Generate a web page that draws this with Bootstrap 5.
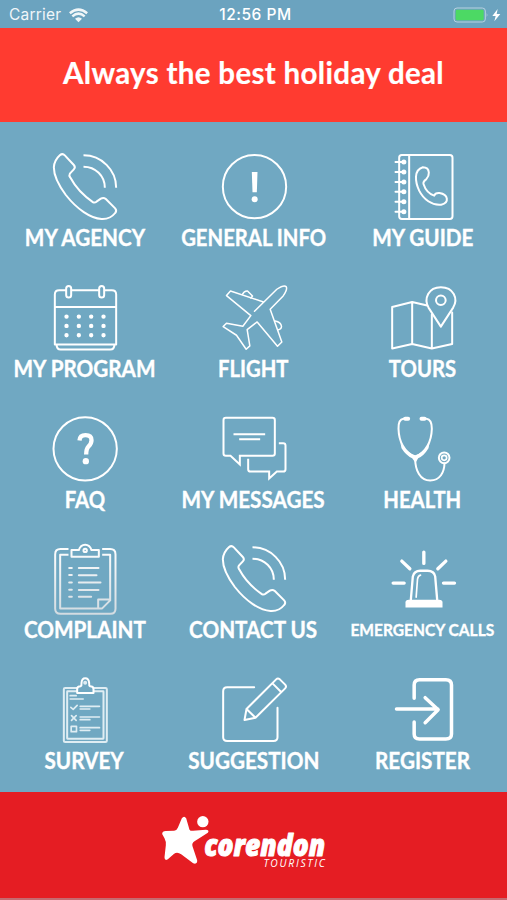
<!DOCTYPE html>
<html lang="en">
<head>
<meta charset="utf-8">
<meta name="viewport" content="width=device-width, initial-scale=1">
<title>Corendon Touristic</title>
<link href="https://cdn.jsdelivr.net/npm/bootstrap@5.3.0/dist/css/bootstrap.min.css" rel="stylesheet">
<style>
:root{--sea:#70a8c2}
body{background:var(--sea);color:#fff;font-family:Lato,sans-serif;overflow:hidden}
.phone{height:900px}
.status{height:28px;background:#6ba3bf;font:400 15.5px/1 Inter,sans-serif;padding:2px 5px 0 9px}
.status>div{flex:1 1 0}
.status .carrier{letter-spacing:.2px;opacity:.9}
.status .clock{font-weight:500;letter-spacing:.55px;text-align:center;font-size:15.5px}
.banner{height:94px;padding-bottom:4px;background:#ff3b30;font-weight:700;font-size:29.5px;letter-spacing:.33px;line-height:1;white-space:nowrap;-webkit-text-stroke:.2px #fff}
.tiles{height:670px;padding-top:26px;display:grid;grid-template-columns:repeat(3,1fr);grid-auto-rows:106px;row-gap:24.75px;align-content:start}
.tile{color:#fff}
.tile:hover{color:#fff}
.tile svg{width:90px;height:76px;flex:none;fill:none;stroke:#fff;stroke-width:6;stroke-linecap:round;stroke-linejoin:round}
.tile .solid{fill:#fff;stroke:none}
.tile .mask{fill:var(--sea)}
.tile span{font-weight:700;font-size:22px;line-height:28px;white-space:nowrap;transform:scaleX(.94);-webkit-text-stroke:.35px #fff}
.tile .fine{font-size:16.3px;transform:scaleX(.955)}
.tile .snug{transform:scaleX(.922)}
.brand{height:108px;background:#e51d23;border-bottom:2px solid #c56a70}
.brand svg{width:220px;height:106px}
</style>
<script src="https://cdn.jsdelivr.net/npm/bootstrap@5.3.0/dist/js/bootstrap.bundle.min.js"></script>
</head>
<body>
<div class="phone d-flex flex-column">
<header>
<div class="status d-flex align-items-center">
<div class="carrier d-flex align-items-center"><span>Carrier</span>
<svg class="ms-2" width="19" height="15" viewBox="0 0 57 45" fill="#fff"><path d="M28.500 43L18 32Q28.500 23 39 32Z"/><path d="M10 25Q28.500 9 47 25M2.500 15.500Q28.500-6 54.500 15.500" fill="none" stroke="#fff" stroke-width="7.500"/></svg></div>
<div class="clock"><span>12:56 PM</span></div>
<div class="d-flex align-items-center justify-content-end"><svg width="49" height="18" viewBox="0 0 147 54"><rect x="3" y="6" width="94" height="42" rx="9" fill="none" stroke="#b7d2df" stroke-width="3"/><rect x="8" y="11" width="84" height="32" rx="4" fill="#4cd964"/><path d="M101 21Q106 27 101 33Z" fill="#b7d2df"/><path d="M134 9L118 30H128L124 46L142 24H131Z" fill="#fff"/></svg></div>
</div>
<div class="banner d-flex align-items-center justify-content-center"><span>Always the best holiday deal</span></div>
</header>
<main class="tiles">
<a class="tile d-flex flex-column align-items-center text-decoration-none" href="#"><svg viewBox="118.5 24 270 228"><g id="call"><path d="M178 46Q186 39 193 46L220 75Q226 82 220 88L208 101Q205 106 209 112C225 142 250 168 278 187Q283 189 288 185L301 176Q309 171 316 177L344 205Q350 212 344 219C333 233 318 238 303 237C270 235 230 208 196 165C172 133 160 105 160 82C161 66 168 55 178 46Z"/><path stroke-linecap="butt" d="M249 46C303 46 347 90 347 143M249 80C285 80 313 108 313 143"/></g></svg><span>MY AGENCY</span></a>
<a class="tile d-flex flex-column align-items-center text-decoration-none" href="#"><svg viewBox="625.5 24 270 228"><circle cx="762" cy="140" r="95"/><path class="solid" d="M754 96H771L769 157H756Z"/><circle class="solid" cx="762.500" cy="178" r="9"/></svg><span class="snug">GENERAL INFO</span></a>
<a class="tile d-flex flex-column align-items-center text-decoration-none" href="#"><svg viewBox="373.5 24 270 228"><rect x="437" y="45" width="160" height="192" rx="8"/><path d="M467 45V237M426 66H452M426 96H452M426 126H452M426 155H452M426 185H452M426 215H452"/><g style="stroke-width:15px"><path d="M451 66h.1M451 96h.1M451 126h.1M451 155h.1M451 185h.1M451 215h.1"/></g><path d="M508 82Q525 82 526 98Q527 108 518 118Q508 124 510 132C515 148 528 162 542 167Q545 158 558 159Q578 162 580 176Q582 190 563 194C535 197 510 178 497 152C485 126 480 90 508 82Z"/></svg><span>MY GUIDE</span></a>

<a class="tile d-flex flex-column align-items-center text-decoration-none" href="#"><svg viewBox="118.5 11.25 270 228"><path d="M163 208V58Q163 45 176 45H334Q347 45 347 58V208ZM163 95H347M168 208Q169 223 180 223H330Q341 223 342 208"/><rect class="mask" x="197" y="32" width="15" height="35" rx="7.500"/><rect class="mask" x="296" y="32" width="15" height="35" rx="7.500"/><path stroke-width="13" d="M198 124h.1M235 124h.1M272 124h.1M309 124h.1M198 152h.1M235 152h.1M272 152h.1M309 152h.1M198 180h.1M235 180h.1M272 180h.1M309 180h.1"/></svg><span>MY PROGRAM</span></a>
<a class="tile d-flex flex-column align-items-center text-decoration-none" href="#"><svg viewBox="625.5 11.25 270 228"><g style="stroke-width:4.5px"><path d="M762 108L829 42Q850 28 857 34Q862 42 848 62L809 102L844 200L831 213L770 140L740 163L748 212L737 222L708 180L668 154L678 144L727 153L751 121L678 61L690 47L789 80"/><path d="M726 57Q731 46 741 47L756 62L751 68M824 137Q841 140 843 153Q843 162 832 164"/></g></svg><span class="snug">FLIGHT</span></a>
<a class="tile d-flex flex-column align-items-center text-decoration-none" href="#"><svg viewBox="373.5 11.25 270 228"><path d="M521 91L476 80L416 95V220L476 206L535 220L596 206V112M476 80V206M535 118V220"/><path d="M562 154L525 97C510 70 525 36 562 36C600 36 615 70 599 97Z"/><circle cx="562" cy="75" r="14.500"/></svg><span class="snug">TOURS</span></a>

<a class="tile d-flex flex-column align-items-center text-decoration-none" href="#"><svg viewBox="118.5 13.5 270 228"><circle cx="254" cy="130" r="95"/><path stroke-width="13" stroke-linecap="butt" d="M237 105Q238 89 255 89Q273 89 273 104Q273 114 264 123Q257 130 257 147"/><circle class="solid" cx="256" cy="167" r="9.500"/></svg><span class="snug">FAQ</span></a>
<a class="tile d-flex flex-column align-items-center text-decoration-none" href="#"><svg viewBox="625.5 13.5 270 228"><path stroke-linejoin="miter" stroke-linecap="butt" d="M718 151H816Q823 151 823 144V44Q823 37 816 37H676Q669 37 669 44V144Q669 151 676 151H690L718 177ZM699 86H794M716 101H779M835 113H848Q855 113 855 120V191Q855 198 848 198H829L806 219V198H750Q743 198 743 191V160"/></svg><span>MY MESSAGES</span></a>
<a class="tile d-flex flex-column align-items-center text-decoration-none" href="#"><svg viewBox="373.5 13.5 270 228"><path d="M458 40H450Q434 42 435 70C436 110 455 140 485 155C515 140 534 110 535 70Q535 42 519 40H511M485 158C485 195 500 225 530 225C560 225 572 200 573 174"/><path stroke-width="12" d="M455 40H464M504 40H513"/><path class="solid" d="M441 113Q460 142 485 149Q510 142 528 113L525 128Q511 151 494 158L486 172L476 158Q458 150 444 128Z"/><circle cx="572" cy="157" r="16"/><circle cx="572" cy="157" r="7.500" stroke-width="5"/></svg><span class="snug">HEALTH</span></a>

<a class="tile d-flex flex-column align-items-center text-decoration-none" href="#"><svg viewBox="118.5 15.75 270 228"><defs><linearGradient id="fade" gradientUnits="userSpaceOnUse" x1="0" y1="30" x2="0" y2="240"><stop stop-color="#fff"/><stop offset="1" stop-color="#d2dbe1"/></linearGradient></defs><g stroke="url(#fade)"><path stroke-linecap="butt" d="M204 43H180Q164 43 164 59V222Q164 237 180 237H330Q345 237 345 222V59Q345 43 329 43H305M204 60H179V221H305L329 197V60H305M293 221V194H328"/><path d="M213 46H235Q240 30 254 30Q268 30 273 46H295V66H213Z"/><circle cx="254" cy="47" r="5"/><path d="M206 100h8M206 121h8M206 143h8M206 165h8M206 186h8M235 100H294M235 121.500H288M235 143H300M235 165.500H294M235 186H272"/></g></svg><span>COMPLAINT</span></a>
<a class="tile d-flex flex-column align-items-center text-decoration-none" href="#"><svg viewBox="118.5 24 270 228"><use href="#call"/></svg><span>CONTACT US</span></a>
<a class="tile d-flex flex-column align-items-center text-decoration-none" href="#"><svg viewBox="373.5 15.75 270 228"><path stroke-width="10" d="M511 52V86M445 79L469 102M577 79L553 102M419 145H452M570 145H603"/><path stroke-width="7" d="M472 195L478 125Q482 108 500 108H522Q542 108 545 125L551 195"/><path stroke-width="5" d="M488 187L492 133Q494 122 501 121"/><path class="solid" d="M456 218V203Q456 195 466 195H557Q567 195 567 203V218Z"/></svg><span class="fine">EMERGENCY CALLS</span></a>

<a class="tile d-flex flex-column align-items-center text-decoration-none" href="#"><svg viewBox="118.5 18 270 228"><g stroke="#dfedf3"><g stroke-width="6"><rect x="190" y="69" width="129" height="162" rx="4"/><rect x="200" y="79" width="109" height="142" rx="1"/><path class="mask" stroke="#fff" d="M230 84V72Q230 64 240 64Q244 62 243 54Q244 40 254 40Q265 40 266 54Q265 62 269 64Q279 64 279 72V84Z"/><circle cx="254" cy="53" r="3"/></g><path stroke-width="5" d="M209 92H227M209 102H248M211 127L218 133L230 121M239 124H297M239 132H268M213 152L227 166M227 152L213 166M239 156H297M239 164H268M212 184H228V200H212ZM239 188H297M239 196H268"/></g></svg><span>SURVEY</span></a>
<a class="tile d-flex flex-column align-items-center text-decoration-none" href="#"><svg viewBox="625.5 18 270 228"><path d="M761 67H680Q668 67 668 79V217Q668 228 680 228H819Q831 228 831 217V128M732 165L738 132L827 43Q832 38 838 43L854 59Q859 65 854 70L765 158ZM816 55L842 81M738 132L765 158"/></svg><span>SUGGESTION</span></a>
<a class="tile d-flex flex-column align-items-center text-decoration-none" href="#"><svg viewBox="373.5 18 270 228"><path stroke-width="10.500" d="M482 100V60Q482 44 498 44H577Q594 44 594 60V207Q594 222 577 222H498Q482 222 482 207V171M429 132H553M515 98L554 134L515 173"/></svg><span>REGISTER</span></a>
</main>
<footer class="brand d-flex justify-content-center"><svg viewBox="10.5 21 660 318" fill="#fff"><circle cx="187" cy="110" r="17"/><path d="M124 100Q131 90 137 100L147 134Q151 139 158 137L196 134Q208 135 202 143Q180 157 162 169Q153 175 156 184L170 226Q171 239 158 235L122 208Q110 199 100 207L82 223Q72 229 72 217L76 181Q77 169 72 160L65 147Q65 138 76 138L101 137Q109 136 112 128Z"/>
<text x="191" y="213" textLength="363" lengthAdjust="spacingAndGlyphs" font-family="Open Sans" font-weight="800" font-style="italic" font-size="88" stroke="#fff" stroke-width="3" stroke-linejoin="round">corendon</text><text x="369" y="245" textLength="184" lengthAdjust="spacing" font-family="Open Sans" font-style="italic" font-size="31">TOURISTIC</text></svg></footer>
</div>
</body>
</html>
